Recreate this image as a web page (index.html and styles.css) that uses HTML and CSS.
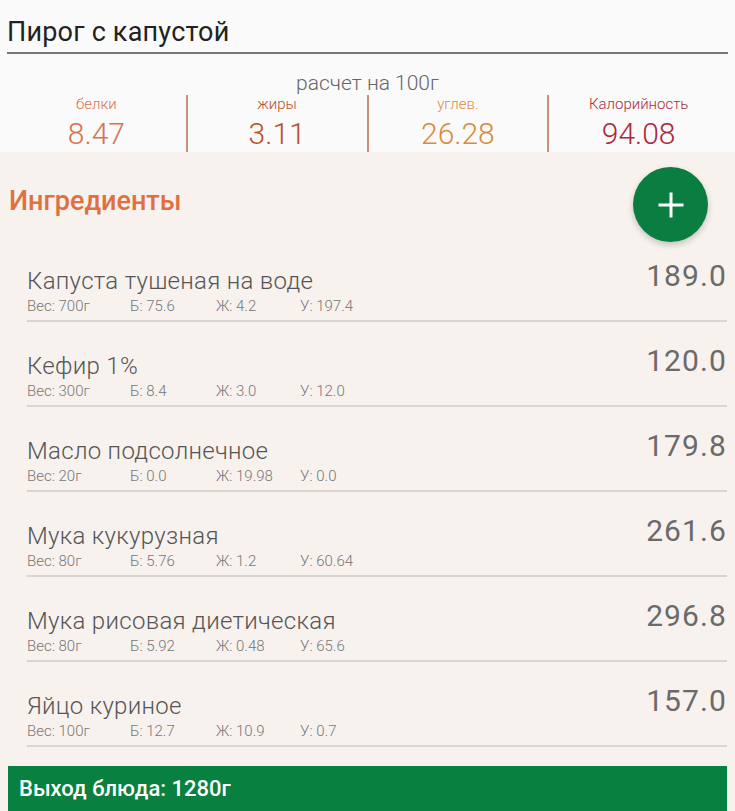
FILE: index.html
```html
<!DOCTYPE html>
<html lang="ru">
<head>
<meta charset="utf-8">
<title>Пирог с капустой</title>
<link rel="stylesheet" href="styles.css">
</head>
<body>
<header class="top">
  <h1 class="title">Пирог с капустой</h1>
  <div class="per">расчет на 100г</div>
  <div class="stats">
    <div class="stat c-b"><span class="lab">белки</span><span class="num">8.47</span></div>
    <div class="stat c-f"><span class="lab">жиры</span><span class="num">3.11</span></div>
    <div class="stat c-c"><span class="lab">углев.</span><span class="num">26.28</span></div>
    <div class="stat c-k"><span class="lab">Калорийность</span><span class="num">94.08</span></div>
  </div>
</header>
<main class="body">
  <div class="head">
    <h2 class="h2">Ингредиенты</h2>
    <button class="fab" aria-label="Добавить"><svg width="28" height="28" viewBox="0 0 28 28"><path d="M14 1.500V26.500M1.500 14H26.500" stroke="#fff" stroke-width="3" fill="none"/></svg></button>
  </div>
  <ul class="list">
    <li class="row"><div class="info"><div class="name">Капуста тушеная на воде</div><div class="meta"><span class="m1">Вес: 700г</span><span class="m2">Б: 75.6</span><span class="m3">Ж: 4.2</span><span>У: 197.4</span></div></div><div class="val">189.0</div></li>
    <li class="row"><div class="info"><div class="name">Кефир 1%</div><div class="meta"><span class="m1">Вес: 300г</span><span class="m2">Б: 8.4</span><span class="m3">Ж: 3.0</span><span>У: 12.0</span></div></div><div class="val">120.0</div></li>
    <li class="row"><div class="info"><div class="name">Масло подсолнечное</div><div class="meta"><span class="m1">Вес: 20г</span><span class="m2">Б: 0.0</span><span class="m3">Ж: 19.98</span><span>У: 0.0</span></div></div><div class="val">179.8</div></li>
    <li class="row"><div class="info"><div class="name">Мука кукурузная</div><div class="meta"><span class="m1">Вес: 80г</span><span class="m2">Б: 5.76</span><span class="m3">Ж: 1.2</span><span>У: 60.64</span></div></div><div class="val">261.6</div></li>
    <li class="row"><div class="info"><div class="name">Мука рисовая диетическая</div><div class="meta"><span class="m1">Вес: 80г</span><span class="m2">Б: 5.92</span><span class="m3">Ж: 0.48</span><span>У: 65.6</span></div></div><div class="val">296.8</div></li>
    <li class="row"><div class="info"><div class="name">Яйцо куриное</div><div class="meta"><span class="m1">Вес: 100г</span><span class="m2">Б: 12.7</span><span class="m3">Ж: 10.9</span><span>У: 0.7</span></div></div><div class="val">157.0</div></li>
  </ul>
  <footer class="bar">Выход блюда: 1280г</footer>
</main>
</body>
</html>
```
FILE: styles.css
```css
html, body { margin: 0; padding: 0; }
body { width: 735px; height: 811px; overflow: hidden; background: #fafafa; font-family: Roboto, "Noto Sans", sans-serif; }
.top { height: 152px; padding: 0 7px; box-sizing: border-box; background: #fafafa; }
.title { margin: 0; height: 54px; box-sizing: border-box; padding: 15px 0 0; border-bottom: 2px solid #777; font-size: 27px; line-height: 34px; font-weight: 400; color: #222; letter-spacing: .2px; }
.per { margin-top: 17px; height: 24px; text-align: center; font-size: 21px; line-height: 24px; font-weight: 300; color: #666; }
.stats { display: flex; height: 57px; }
.stat { flex: 1; display: flex; flex-direction: column; align-items: center; border-right: 2px solid #c9907c; box-sizing: border-box; }
.stat:last-child { border-right: 0; }
.lab { font-size: 15px; line-height: 18px; font-weight: 300; }
.num { font-size: 30px; line-height: 34px; margin-top: 4px; font-weight: 300; }
.c-b { color: #d9724c; }
.c-f { color: #bb4d28; }
.c-c { color: #d98a3a; }
.c-k { color: #a92a3c; }
.body { height: 659px; background: #f7f2ee; display: flex; flex-direction: column; }
.head { display: flex; justify-content: space-between; align-items: center; padding: 15px 27px 0 9px; height: 75px; flex: none; }
.h2 { margin: 0 0 7px; font-size: 27px; line-height: 32px; font-weight: 500; color: #e0703f; }
.fab { width: 75px; height: 75px; border: 0; border-radius: 50%; padding: 0; background: #0a7d40; box-shadow: 0 3px 6px rgba(0,0,0,.2); display: flex; align-items: center; justify-content: center; }
.list { list-style: none; margin: 0; padding: 0 8px 0 27px; }
.row { height: 85px; box-sizing: border-box; display: flex; justify-content: space-between; border-bottom: 2px solid #d9d5d1; }
.row:first-child { height: 80px; }
.info { align-self: flex-end; padding-bottom: 4px; }
.name { font-size: 24px; line-height: 30px; color: #555; font-weight: 300; letter-spacing: .3px; }
.meta { display: flex; font-size: 15px; line-height: 20px; color: #777; font-weight: 300; }
.m1 { width: 103px; }
.m2 { width: 86px; }
.m3 { width: 84px; }
.val { font-size: 30px; line-height: 36px; letter-spacing: 1.1px; color: #6a6a6a; align-self: flex-start; margin-top: 21px; }
.row:first-child .val { margin-top: 16px; }
.bar { margin: 19px 8px 0; height: 46px; background: #08803f; color: #fff; font-size: 22px; line-height: 46px; padding-left: 11px; font-weight: 500; }
```
